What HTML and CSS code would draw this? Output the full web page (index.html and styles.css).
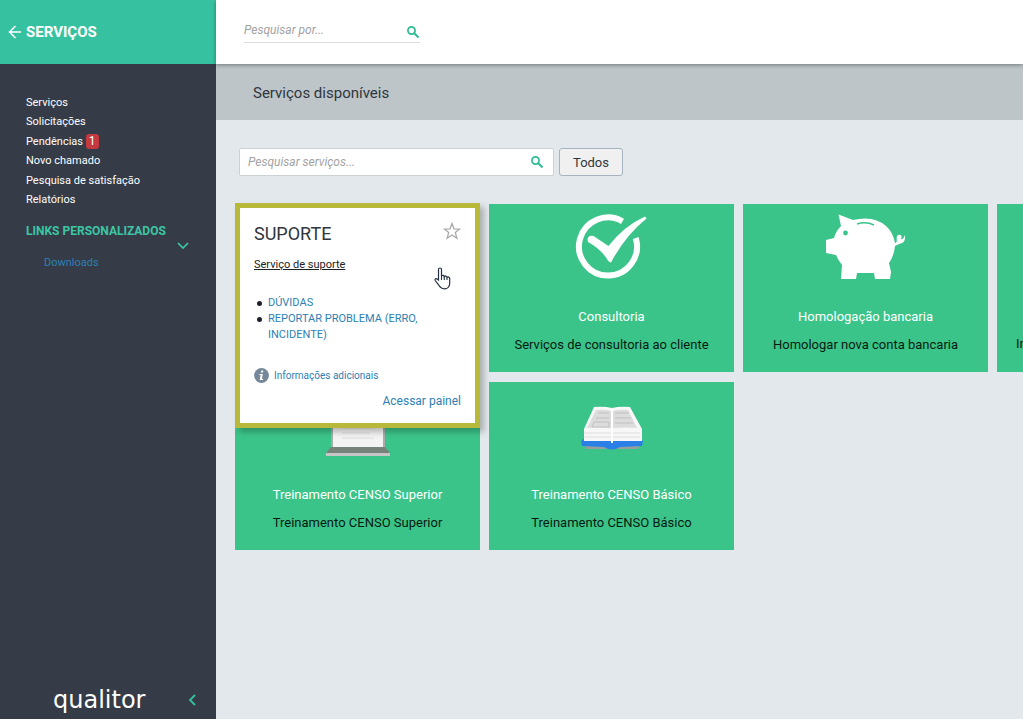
FILE: index.html
```html
<!DOCTYPE html>
<html lang="pt-BR">
<head>
<meta charset="utf-8">
<title>Serviços disponíveis</title>
<link rel="stylesheet" href="styles.css">
</head>
<body>
<div class="app">
  <aside class="sidebar">
    <a class="sidebar-head" href="#">
      <svg class="back" viewBox="0 0 13 14" fill="none" stroke="currentColor" stroke-width="1.5"><path d="M13 7H1.500M7.500 1L1.500 7l6 6"/></svg>
      <span>SERVIÇOS</span>
    </a>
    <nav class="menu">
      <a href="#">Serviços</a>
      <a href="#">Solicitações</a>
      <a href="#">Pendências <span class="badge">1</span></a>
      <a href="#">Novo chamado</a>
      <a href="#">Pesquisa de satisfação</a>
      <a href="#">Relatórios</a>
    </nav>
    <section class="links">
      <h2 class="links-title">LINKS PERSONALIZADOS</h2>
      <button class="toggle" aria-label="Recolher links"><svg viewBox="0 0 12 8" width="12" height="8" fill="none" stroke="currentColor" stroke-width="1.7"><path d="M1 1l5 5 5-5"/></svg></button>
      <a class="download" href="#">Downloads</a>
    </section>
    <footer class="brand">
      <span class="logo">qualitor</span>
      <button class="collapse" aria-label="Recolher menu"><svg viewBox="0 0 8 12" width="8" height="12" fill="none" stroke="currentColor" stroke-width="1.8"><path d="M7 1L2 6l5 5"/></svg></button>
    </footer>
  </aside>
  <div class="main">
    <header class="topbar">
      <form class="search">
        <input class="search-input" type="text" placeholder="Pesquisar por..." aria-label="Pesquisar por">
        <button class="search-btn" type="button" aria-label="Pesquisar"><svg viewBox="0 0 12 12" width="12" height="12" fill="none" stroke="currentColor"><circle cx="4.500" cy="4.500" r="3.600" stroke-width="1.700"/><path d="M7 7l4.500 4.500" stroke-width="2"/></svg></button>
      </form>
    </header>
    <h1 class="title">Serviços disponíveis</h1>
    <main class="content">
      <div class="filters">
        <div class="filter">
          <input class="filter-input" type="text" placeholder="Pesquisar serviços..." aria-label="Pesquisar serviços">
          <button class="search-btn" type="button" aria-label="Pesquisar"><svg viewBox="0 0 12 12" width="12" height="12" fill="none" stroke="currentColor"><circle cx="4.500" cy="4.500" r="3.600" stroke-width="1.700"/><path d="M7 7l4.500 4.500" stroke-width="2"/></svg></button>
        </div>
        <button class="all">Todos</button>
      </div>
      <div class="grid">
        <div class="slot">
          <article class="detail">
            <div class="detail-head">
              <h2 class="detail-title">SUPORTE</h2>
              <button class="star" aria-label="Favoritar"><svg viewBox="0 0 18 18" width="18" height="18" fill="none" stroke="currentColor" stroke-width="1.300"><path d="M9 1.500l2 5.300 5.800.2-4.500 3.600 1.600 5.600L9 13l-4.900 3.200 1.600-5.600L1.200 7 7 6.800z"/></svg></button>
            </div>
            <a class="detail-sub" href="#">Serviço de suporte</a>
            <ul class="detail-list">
              <li><a href="#">DÚVIDAS</a></li>
              <li><a href="#">REPORTAR PROBLEMA (ERRO, INCIDENTE)</a></li>
            </ul>
            <a class="info" href="#"><svg viewBox="0 0 15 15" width="15" height="15"><circle cx="7.500" cy="7.500" r="7.400" fill="#75889a"/><path d="M7.300 2.500h2L9 4.500H7zM5.500 6h3.300L7.900 11h1.300l-.2 1H5.700L6.600 7H5.400z" fill="#fff"/></svg><span>Informações adicionais</span></a>
            <a class="panel" href="#">Acessar painel</a>
            <svg class="pointer" viewBox="0 0 17 23" width="17" height="23"><path d="M4.500 13V2.500c0-2 3-2 3 0V9c.5-1 2.700-.8 2.800.6.700-1 2.600-.6 2.700.8.800-.8 2.700-.4 2.700 1.200v4.600c0 3-2 5.600-5.200 5.600-3.300 0-4.600-1.500-6-4L1.200 13.500c-.7-1.600 1-2.600 2-1.400z" fill="#fff" stroke="#253041" stroke-width="1.200"/><path d="M7.500 8v5M10.300 9.500V13M13 10.500V13" stroke="#253041" stroke-width="1.100"/></svg>
          </article>
        </div>
        <article class="card">
          <svg class="pic" viewBox="0 0 80 66" width="80" height="66"><path d="M50.500 7.400A29 29 0 1 0 63.700 24" fill="none" stroke="#fff" stroke-width="6"/><path d="M15.500 25q1-4 6-3l15 10Q52 12 73 2.500l1.500 2Q53 22 39 48.500q-2 0-3-2Q29 35 16 28z" fill="#fff"/></svg>
          <h3 class="card-title">Consultoria</h3>
          <p class="card-text">Serviços de consultoria ao cliente</p>
        </article>
        <article class="card">
          <svg class="pic" viewBox="0 0 80 66" width="80" height="66"><path d="M12.500.5L27 6Q48 1 60 12q7 6 9 17c3 0 1-5 2-7 3-3 6 0 4 3 2 1 3-2 4-4q1 8-6 9-2 1-4 2-1 10-6 17l2 9-1 7H49l-1-6H31l-1 6H15l1-14Q12 46 10 41L0 39V26l8-2q2-7 7-12z" fill="#fff"/><circle cx="19.500" cy="19" r="2.400" fill="#3bc48a"/><path d="M31 10Q40 7 48 11" fill="none" stroke="#3bc48a" stroke-width="1.600"/></svg>
          <h3 class="card-title">Homologação bancaria</h3>
          <p class="card-text">Homologar nova conta bancaria</p>
        </article>
        <article class="card card-cut">
          <p class="card-text">In</p>
        </article>
        <article class="card">
          <svg class="pic" viewBox="0 0 80 66" width="80" height="66"><path d="M13 20h54v39H13z" fill="#aaa"/><path d="M15 20h50v35H15z" fill="#f3f3f3"/><path d="M24 36h32M24 41h28M24 46h32" stroke="#ddd"/><path d="M13 55h54l5 6H8z" fill="#77827b"/><path d="M8 61h64v3H8z" fill="#c6c6c6"/></svg>
          <h3 class="card-title">Treinamento CENSO Superior</h3>
          <p class="card-text">Treinamento CENSO Superior</p>
        </article>
        <article class="card">
          <svg class="pic" viewBox="0 0 80 66" width="80" height="66"><path d="M12 52h56l-2 5H14z" fill="#969f9d"/><path d="M9 49l5-4h52l5 4-1 5-22 1q-8 5-16 0l-22-1z" fill="#2b80e8"/><path d="M22 15q10-1 18 1 8-2 18-1l12 22v12H12V37z" fill="#f7f7f7"/><path d="M24 18q9-1 15 1v17q-12-1-24 0zM56 18q-8-1-15 1v17q12-1 24 0z" fill="#dcdcdc"/><path d="M26 21h11M24 26h13M61 31H43M57 21H43M59 26H43M22 30h15v5H20z" fill="none" stroke="#c0c0c0"/><path d="M12 41h27M68 41H41M12 45h27M68 45H41" fill="none" stroke="#ddd"/><path d="M40 17v34" stroke="#fff" stroke-width="2"/></svg>
          <h3 class="card-title">Treinamento CENSO Básico</h3>
          <p class="card-text">Treinamento CENSO Básico</p>
        </article>
      </div>
    </main>
  </div>
</div>
</body>
</html>
```
FILE: styles.css
```css
* { box-sizing: border-box; }
body { margin: 0; font-family: Roboto, "Liberation Sans", sans-serif; font-size: 13px; color: #2f363d; background: #e2e8eb; }
a { color: #2e7fb5; text-decoration: none; }
button { padding: 0; border: 0; background: none; font: inherit; cursor: pointer; }
h1, h2, h3, p, ul { margin: 0; padding: 0; font-weight: 400; }
svg { display: block; }
.app { display: flex; min-height: 100vh; overflow: hidden; }

.sidebar { display: flex; flex-direction: column; flex: 0 0 216px; background: #353c47; }
.sidebar-head { display: flex; align-items: center; gap: 5px; height: 64px; padding-left: 8px; background: #36c2a0; color: #fff; font-size: 15px; font-weight: 700; }
.back { width: 13px; height: 14px; }
.menu { display: flex; flex-direction: column; justify-content: space-between; height: 144px; padding: 31px 26px 0; }
.menu a { line-height: 16px; font-size: 11px; color: #fff; white-space: nowrap; }
.badge { display: inline-block; width: 13px; border-radius: 3px; background: #c43840; font-size: 12px; line-height: 15px; text-align: center; }
.links { display: flex; flex-direction: column; align-items: flex-start; padding: 15px 26px 0; }
.links-title { font-size: 12px; font-weight: 700; line-height: 16px; color: #3cc6a4; white-space: nowrap; }
.toggle { align-self: flex-end; padding: 3px 1px; color: #3cc6a4; }
.download { padding-left: 18px; margin-top: 2px; font-size: 11px; line-height: 16px; }
.brand { display: flex; align-items: center; justify-content: space-between; margin-top: auto; padding: 0 20px 5px 53px; }
.logo { font-family: "DejaVu Sans", sans-serif; font-size: 24px; line-height: 28px; color: #fff; }
.collapse { color: #36c2a0; }

.main { flex: 1; min-width: 0; }
.topbar { position: relative; height: 64px; padding: 18px 28px 0; background: #fff; box-shadow: 0 1px 4px rgba(0, 0, 0, .4); }
.search { display: flex; align-items: center; width: 176px; height: 25px; border-bottom: 1px solid #ddd; }
.search-input, .filter-input { flex: 1; min-width: 0; border: 0; padding: 0; outline: 0; background: none; font: italic 12px Roboto, sans-serif; }
.search-input::placeholder, .filter-input::placeholder { color: #a2a2a2; opacity: 1; }
.search-btn { color: #2fbd94; }
.search .search-btn { padding: 4px 1px 0 0; }
.title { padding: 1px 37px 0; height: 56px; line-height: 56px; font-size: 15px; background: #bdc5c9; color: #2f363d; }
.content { padding: 28px 18px; }
.filters { display: flex; gap: 5px; padding-left: 5px; }
.filter { display: flex; align-items: center; width: 315px; height: 28px; padding: 0 10px 0 8px; border: 1px solid #ccd1d4; border-radius: 2px; background: #fff; }
.all { width: 64px; height: 28px; border: 1px solid #a6b3c1; border-radius: 3px; background: #f0f0f0; color: #2f363d; }

.grid { display: grid; grid-template-columns: repeat(4, 245px); grid-auto-rows: 168px; gap: 10px 9px; padding: 28px 0 0 1px; }
.slot { position: relative; }
.card { display: flex; flex-direction: column; align-items: center; padding-top: 10px; background: #3bc48a; line-height: 16px; }
.card-title { margin-top: 29px; font-size: 13px; color: #fff; }
.card-text { margin-top: 12px; color: #071a10; }
.card-cut { align-items: flex-start; justify-content: flex-end; padding: 0 19px 20px; }
/* The open card covers its own slot and the row below. */
.detail { position: absolute; z-index: 1; inset: -1px 0 auto; padding: 14px 14px 13px; border: 5px solid #b8b93b; background: #fff; box-shadow: 4px 4px 6px rgba(0, 0, 0, .25); }
.detail-head { display: flex; align-items: flex-start; justify-content: space-between; height: 24px; }
.detail-title { font-size: 18px; line-height: 24px; color: #2f363d; }
.star { color: #aaa; }
.detail-sub { display: block; margin-top: 11px; font-size: 11px; line-height: 16px; color: #1c2127; text-decoration: underline; }
.detail-list { margin-top: 22px; font-size: 11px; line-height: 16px; list-style: none; }
.detail-list li { display: flex; gap: 6px; padding-left: 3px; }
.detail-list li::before { content: ""; flex: none; width: 5px; height: 5px; margin-top: 6px; border-radius: 50%; background: #1c2127; }
.info { display: flex; align-items: center; gap: 5px; height: 16px; margin-top: 24px; font-size: 10px; }
.panel { display: block; margin-top: 9px; line-height: 18px; font-size: 12px; text-align: right; }
.pointer { position: absolute; top: 59px; right: 24px; }
```
